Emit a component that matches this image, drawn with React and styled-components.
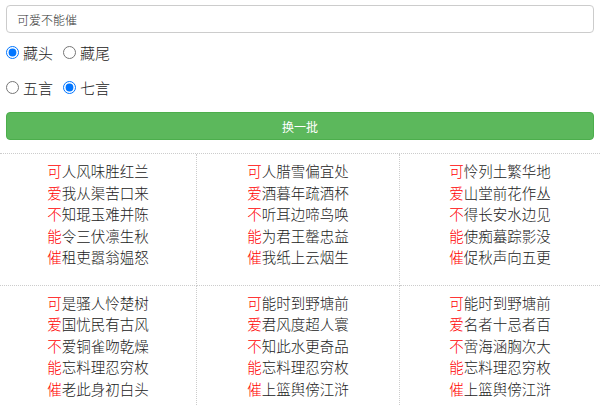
import React, { useState } from 'react';
import styled, { createGlobalStyle } from 'styled-components';

const GlobalStyle = createGlobalStyle`
  body {
    margin: 0;
    background: #fff;
    font-family: "Liberation Sans", "Noto Sans CJK SC", sans-serif;
    color: #333;
  }
`;

const Form = styled.div`
  padding: 5px 6px 0;
  display: flex;
  flex-direction: column;
`;

const Input = styled.input`
  box-sizing: border-box;
  width: 100%;
  height: 28px;
  border: 1px solid #ccc;
  border-radius: 4px;
  padding: 0 10px;
  font-size: 12px;
  font-family: "Noto Sans CJK SC", sans-serif;
  font-weight: 300;
  color: #333;
  outline: none;
`;

const RadioRow = styled.div`
  display: flex;
  align-items: center;
  height: 20px;
  margin-top: ${({ $top }) => $top}px;
  font-family: "Noto Sans CJK SC", sans-serif;
  font-weight: 300;
  font-size: 15px;
  color: #222;
`;

const Option = styled.label`
  display: flex;
  align-items: center;
  gap: 4px;
  margin-right: 10px;
  cursor: pointer;

  input {
    margin: 0;
    width: 13px;
    height: 13px;
  }
`;

const Button = styled.button`
  margin-top: 15px;
  height: 28px;
  width: 100%;
  background: #5cb85c;
  border: 1px solid #4cae4c;
  border-radius: 4px;
  color: #fff;
  font-size: 12px;
  font-family: "Noto Sans CJK SC", sans-serif;
  cursor: pointer;
`;

const Grid = styled.div`
  margin-top: 13px;
  display: grid;
  grid-template-columns: 197px 203px 1fr;
  border-top: 1px dotted #ccc;
`;

const Cell = styled.div`
  padding: 6px 0 17px;
  border-bottom: 1px dotted #ccc;
  border-right: ${({ $last }) => ($last ? 'none' : '1px dotted #ccc')};
  display: flex;
  flex-direction: column;
  align-items: center;
  font-family: "Noto Sans CJK SC", sans-serif;
  font-weight: 300;
  font-size: 14.5px;
  line-height: 21.5px;
  color: #222;
`;

const Line = styled.div`
  white-space: nowrap;
`;

const Head = styled.span`
  color: #f00;
`;

const poems = [
  ['可人风味胜红兰', '爱我从渠苦口来', '不知琨玉难并陈', '能令三伏凛生秋', '催租吏嚣翁媪怒'],
  ['可人腊雪偏宜处', '爱酒暮年疏酒杯', '不听耳边啼鸟唤', '能为君王罄忠益', '催我纸上云烟生'],
  ['可怜列土繁华地', '爱山堂前花作丛', '不得长安水边见', '能使痴蟇踪影没', '催促秋声向五更'],
  ['可是骚人怜楚树', '爱国忧民有古风', '不爱铜雀吻乾燥', '能忘料理忍穷枚', '催老此身初白头'],
  ['可能时到野塘前', '爱君风度超人寰', '不知此水更奇品', '能忘料理忍穷枚', '催上篮舆傍江浒'],
  ['可能时到野塘前', '爱名者十忌者百', '不啻海涵胸次大', '能忘料理忍穷枚', '催上篮舆傍江浒'],
];

export default function App() {
  const [mode, setMode] = useState('head');
  const [len, setLen] = useState('7');

  return (
    <>
      <GlobalStyle />
      <Form>
        <Input defaultValue="可爱不能催" />
        <RadioRow $top={9}>
          <Option>
            <input type="radio" checked={mode === 'head'} onChange={() => setMode('head')} />
            藏头
          </Option>
          <Option>
            <input type="radio" checked={mode === 'tail'} onChange={() => setMode('tail')} />
            藏尾
          </Option>
        </RadioRow>
        <RadioRow $top={15}>
          <Option>
            <input type="radio" checked={len === '5'} onChange={() => setLen('5')} />
            五言
          </Option>
          <Option>
            <input type="radio" checked={len === '7'} onChange={() => setLen('7')} />
            七言
          </Option>
        </RadioRow>
        <Button>换一批</Button>
      </Form>
      <Grid>
        {poems.map((poem, i) => (
          <Cell key={i} $last={i % 3 === 2}>
            {poem.map((line, j) => (
              <Line key={j}>
                <Head>{line[0]}</Head>
                {line.slice(1)}
              </Line>
            ))}
          </Cell>
        ))}
      </Grid>
    </>
  );
}
